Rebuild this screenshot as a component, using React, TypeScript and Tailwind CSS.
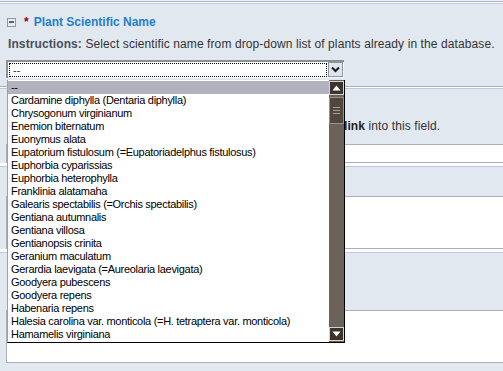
import React from "react";

const items = [
  "--",
  "Cardamine diphylla (Dentaria diphylla)",
  "Chrysogonum virginianum",
  "Enemion biternatum",
  "Euonymus alata",
  "Eupatorium fistulosum (=Eupatoriadelphus fistulosus)",
  "Euphorbia cyparissias",
  "Euphorbia heterophylla",
  "Franklinia alatamaha",
  "Galearis spectabilis (=Orchis spectabilis)",
  "Gentiana autumnalis",
  "Gentiana villosa",
  "Gentianopsis crinita",
  "Geranium maculatum",
  "Gerardia laevigata (=Aureolaria laevigata)",
  "Goodyera pubescens",
  "Goodyera repens",
  "Habenaria repens",
  "Halesia carolina var. monticola (=H. tetraptera var. monticola)",
  "Hamamelis virginiana",
];

const font = { fontFamily: '"Liberation Sans", Arial, sans-serif' };

function MinusBox() {
  return (
    <span className="inline-flex h-[9px] w-[9px] items-center justify-center border border-[#8e98a8] bg-[#e8edf3]">
      <span className="h-[2px] w-[5px] bg-[#5a6478]" />
    </span>
  );
}

function Header({ title }: { title: string }) {
  return (
    <div className="flex h-[26px] items-center pl-[7px] pt-[10px]">
      <MinusBox />
      <span className="ml-[8px] text-[12px] font-bold leading-[12px] text-[#a00000]">*</span>
      <span className="ml-[5px] text-[12px] font-bold leading-[16px] text-[#1f7fcb]">{title}</span>
    </div>
  );
}

export default function App() {
  return (
    <div className="relative h-[371px] w-[503px] overflow-hidden bg-[#e2e8f0] text-[#333]" style={font}>
      {/* top divider */}
      <div className="h-[1px] bg-[#eef1f6]" />
      <div className="h-[1px] bg-[#aab1bd]" />
      <div className="h-[1px] bg-white" />

      {/* section 1 */}
      <div className="h-[83px] border-t border-[#c2c6e4] bg-[#e2e8f0]">
        <Header title="Plant Scientific Name" />
        <div className="mt-[7px] whitespace-nowrap pl-[8px] text-[12px] leading-[14px] tracking-[0.1px] text-[#333]">
          <b className="text-[#4a4f57]">Instructions:</b> Select scientific name from drop-down list of plants already in the database.
        </div>
        <div className="ml-[6px] mt-[9px] flex h-[18px] w-[338px] border-l-2 border-t-2 border-[#8f8f8f] bg-white">
          <div className="m-[1px] flex-1 border border-dotted border-black pl-[3px] text-[11px] leading-[12px]">--</div>
          <div className="mr-[1px] flex h-[15px] w-[15px] items-center justify-center border border-[#8c95a4] bg-[#dfe5ef]">
            <svg width="9" height="7" viewBox="0 0 9 7">
              <path d="M1 1.5 L4.5 5 L8 1.5" stroke="#1a1a1a" strokeWidth="2" fill="none" />
            </svg>
          </div>
        </div>
      </div>
      <div className="h-[1px] bg-[#a9b0bc]" />
      <div className="h-[1px] bg-white" />

      {/* section 2 */}
      <div className="h-[75px] border-t border-[#c2c6e4] bg-[#e2e8f0]">
        <div className="h-[26px]" />
        <div className="mt-[4px] flex h-[14px] whitespace-nowrap pl-[8px] text-[12px] leading-[14px] tracking-[0.1px]">
          <span className="w-[336px] shrink-0" />
          <span>
            <b className="text-[#222]">link</b> into this field.
          </span>
        </div>
        <div className="ml-[6px] mt-[11px] h-[19px] w-[520px] border border-[#a9b0bc] bg-white" />
      </div>
      <div className="h-[3px] bg-white" />

      {/* section 3 */}
      <div className="h-[83px] border-t border-[#c2c6e4] bg-[#e2e8f0]">
        <div className="h-[26px]" />
        <div className="ml-[6px] mt-[3px] h-[53px] w-[520px] border border-[#a9b0bc] bg-white" />
      </div>
      <div className="h-[3px] bg-white" />

      {/* section 4 */}
      <div className="border-t border-[#c2c6e4] bg-[#e2e8f0]">
        <div className="h-[26px]" />
        <div className="mt-[7px] h-[14px]" />
        <div className="ml-[6px] mt-[10px] h-[53px] w-[520px] border border-[#a9b0bc] bg-white" />
      </div>

      {/* dropdown list overlay */}
      <div className="absolute left-[7px] top-[80px] flex h-[263px] w-[338px] border-b border-l border-r border-b-black border-l-[#a0a0a0] border-r-black bg-white">
        <div className="flex-1 pt-[1px]">
          {items.map((t, i) => (
            <div
              key={t}
              className={`h-[13px] whitespace-nowrap pl-[3px] text-[11px] leading-[13px] tracking-[-0.3px] text-black ${i === 0 ? "bg-[#b0b3bf]" : ""}`}
            >
              {t}
            </div>
          ))}
        </div>
        <div className="flex w-[15px] flex-col bg-[#6b6259] pt-[1px]">
          <div className="flex h-[14px] items-center justify-center border border-[#d8d2ca] bg-[#3b342e]">
            <svg width="9" height="6" viewBox="0 0 9 6">
              <path d="M0.5 5.5 L4.5 0.5 L8.5 5.5 Z" fill="white" />
            </svg>
          </div>
          <div className="mt-[2px] flex h-[27px] flex-col items-center justify-center gap-[2px] border border-[#9a9086] bg-[#50473f]">
            <span className="h-[1px] w-[7px] bg-[#a89e92]" />
            <span className="h-[1px] w-[7px] bg-[#a89e92]" />
            <span className="h-[1px] w-[7px] bg-[#a89e92]" />
          </div>
          <div className="flex-1" />
          <div className="mb-[1px] flex h-[14px] items-center justify-center border border-[#d8d2ca] bg-[#3b342e]">
            <svg width="9" height="6" viewBox="0 0 9 6">
              <path d="M0.5 0.5 L4.5 5.5 L8.5 0.5 Z" fill="white" />
            </svg>
          </div>
        </div>
      </div>
    </div>
  );
}
